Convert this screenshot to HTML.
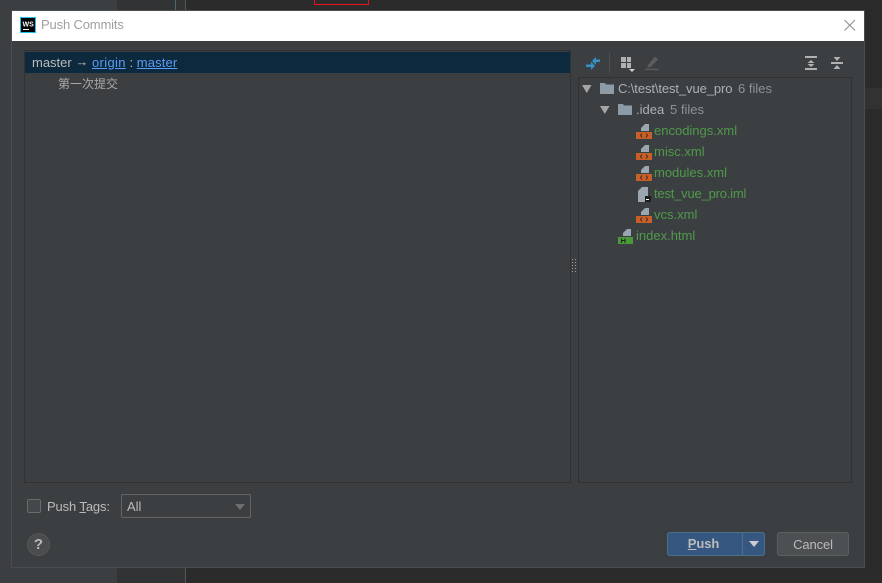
<!DOCTYPE html>
<html>
<head>
<meta charset="utf-8">
<style>
html,body{margin:0;padding:0;width:882px;height:583px;overflow:hidden;background:#2b2b2b;font-family:"Liberation Sans","Noto Sans CJK SC",sans-serif;font-size:13px;color:#bbb}
div,span,svg{position:absolute;white-space:nowrap;box-sizing:border-box}
u{text-underline-offset:1px}
.t{line-height:21px;height:21px}
.g{color:#4f9a4a}
.n{color:#8f9294}
</style>
</head>
<body>
<div style="left:0;top:0;width:117px;height:583px;background:#3c3f41"></div>
<div style="left:117px;top:0;width:68px;height:583px;background:#313335"></div>
<div style="left:185px;top:0;width:1px;height:583px;background:#555"></div>
<div style="left:175px;top:0;width:1px;height:10px;background:#4a6a70"></div>
<div style="left:314px;top:-2px;width:55px;height:7px;border:1px solid #e81123"></div>
<div style="left:864px;top:88px;width:18px;height:21px;background:#323232"></div>

<div style="left:11px;top:10px;width:854px;height:558px;background:#3c3f41;border:1px solid #4a4c4e"></div>
<div style="left:12px;top:11px;width:852px;height:30px;background:#fff"></div>
<svg style="left:20px;top:17px" width="16" height="16" viewBox="0 0 16 16"><rect x=".5" y=".5" width="15" height="15" fill="#000" stroke="#1cc4ee"/><rect x="3" y="12" width="6" height="1" fill="#fff"/><text x="2.500" y="9.500" font-family="Liberation Sans" font-size="7" font-weight="700" fill="#fff">WS</text></svg>
<div style="left:41px;top:15px;line-height:20px;color:#a0a0a0;font-size:13px;letter-spacing:-.15px">Push Commits</div>
<svg style="left:843px;top:19px" width="14" height="13" viewBox="0 0 14 13"><path d="M1.500 1L12 11.500M12 1L1.500 11.500" stroke="#8c8c8c" stroke-width="1" fill="none"/></svg>

<div style="left:24px;top:50px;width:547px;height:433px;border:1px solid #323232"></div>
<div style="left:25px;top:52px;width:545px;height:21px;background:#0d293e"></div>
<div class="t" style="left:32px;top:52px;color:#bbb">master <span style="position:relative;top:-1px">→</span> <u style="color:#589df6;letter-spacing:.35px">origin</u> : <u style="color:#589df6;letter-spacing:.15px">master</u></div>
<div class="t" style="left:58px;top:74px;color:#a9a9a9;font-size:12px">第一次提交</div>

<svg style="left:572px;top:259px" width="5" height="14"><g fill="#a0a0a0"><rect x="0" y="0" width="1" height="1"/><rect x="3" y="0" width="1" height="1"/><rect x="0" y="3" width="1" height="1"/><rect x="3" y="3" width="1" height="1"/><rect x="0" y="6" width="1" height="1"/><rect x="3" y="6" width="1" height="1"/><rect x="0" y="9" width="1" height="1"/><rect x="3" y="9" width="1" height="1"/><rect x="0" y="12" width="1" height="1"/><rect x="3" y="12" width="1" height="1"/></g></svg>

<svg style="left:585px;top:55px" width="16" height="16" viewBox="0 0 16 16"><path d="M15 4.500V7H11V10L7 6L11 2V4.500ZM1 9.500H6V6.500L10 11L6 15V12H1Z" fill="#3592c4"/></svg>
<div style="left:609px;top:53px;width:1px;height:20px;background:#515151"></div>
<svg style="left:620px;top:57px" width="16" height="16" viewBox="0 0 16 16"><g fill="#afb1b3"><rect x="1" y="0" width="5" height="5"/><rect x="7" y="0" width="4" height="5"/><rect x="1" y="6" width="5" height="5"/><rect x="7" y="6" width="4" height="5"/></g><path d="M9 12H15L12 15Z" fill="#cfcfcf"/></svg>
<svg style="left:644px;top:55px" width="16" height="16" viewBox="0 0 16 16"><path d="M4 10L11 1.500L14 4.500L6.500 12L3.500 12.500ZM1 13.700H15V15H1Z" fill="#5a5c5e"/></svg>
<svg style="left:803px;top:55px" width="16" height="16" viewBox="0 0 16 16"><path d="M2 1H14V3H2ZM2 13H14V15H2ZM8 5L11.500 8H4.500ZM4.500 9H11.500L8 12Z" fill="#afb1b3"/></svg>
<svg style="left:829px;top:55px" width="16" height="16" viewBox="0 0 16 16"><path d="M2 7H14V9H2ZM4.500 2H11.500L8 6ZM8 10L11.500 14H4.500Z" fill="#afb1b3"/></svg>

<div style="left:578px;top:77px;width:274px;height:406px;border:1px solid #323232"></div>

<svg style="left:582px;top:85px" width="10" height="8"><path d="M0 0H9.500L4.750 8Z" fill="#a4a6a8"/></svg>
<svg style="left:600px;top:83px" width="14" height="11"><path d="M0 0H5L6 1.500H14V11H0Z" fill="#8d9ba6"/></svg>
<div class="t" style="left:618px;top:78px;color:#a9b1b8;letter-spacing:-.1px">C:\test\test_vue_pro</div>
<div class="t n" style="left:738px;top:78px">6 files</div>

<svg style="left:600px;top:106px" width="10" height="8"><path d="M0 0H9.500L4.750 8Z" fill="#a4a6a8"/></svg>
<svg style="left:618px;top:104px" width="14" height="11"><path d="M0 0H5L6 1.500H14V11H0Z" fill="#8d9ba6"/></svg>
<div class="t" style="left:636px;top:99px;color:#a9b1b8">.idea</div>
<div class="t n" style="left:670px;top:99px">5 files</div>

<svg style="left:636px;top:123px" width="16" height="16" viewBox="0 0 16 16"><path d="M5 5L9 1H13V8H5Z" fill="#9aa7b0"/><rect x="0" y="9" width="16" height="7" fill="#c75f28"/><path d="M6 10.500L4.500 12.500L6 14.500M10 10.500L11.500 12.500L10 14.500" stroke="#3a2a20" fill="none"/></svg>
<div class="t g" style="left:654px;top:120px">encodings.xml</div>
<svg style="left:636px;top:144px" width="16" height="16" viewBox="0 0 16 16"><path d="M5 5L9 1H13V8H5Z" fill="#9aa7b0"/><rect x="0" y="9" width="16" height="7" fill="#c75f28"/><path d="M6 10.500L4.500 12.500L6 14.500M10 10.500L11.500 12.500L10 14.500" stroke="#3a2a20" fill="none"/></svg>
<div class="t g" style="left:654px;top:141px">misc.xml</div>
<svg style="left:636px;top:165px" width="16" height="16" viewBox="0 0 16 16"><path d="M5 5L9 1H13V8H5Z" fill="#9aa7b0"/><rect x="0" y="9" width="16" height="7" fill="#c75f28"/><path d="M6 10.500L4.500 12.500L6 14.500M10 10.500L11.500 12.500L10 14.500" stroke="#3a2a20" fill="none"/></svg>
<div class="t g" style="left:654px;top:162px">modules.xml</div>
<svg style="left:636px;top:186px" width="16" height="16" viewBox="0 0 16 16"><path d="M2 5L6 1H12V10H9V16H2Z" fill="#9aa7b0"/><rect x="9" y="10" width="6" height="6" fill="#1e1e1e"/><rect x="10" y="13" width="3" height="1" fill="#fff"/></svg>
<div class="t g" style="left:654px;top:183px;letter-spacing:-.2px">test_vue_pro.iml</div>
<svg style="left:636px;top:207px" width="16" height="16" viewBox="0 0 16 16"><path d="M5 5L9 1H13V8H5Z" fill="#9aa7b0"/><rect x="0" y="9" width="16" height="7" fill="#c75f28"/><path d="M6 10.500L4.500 12.500L6 14.500M10 10.500L11.500 12.500L10 14.500" stroke="#3a2a20" fill="none"/></svg>
<div class="t g" style="left:654px;top:204px">vcs.xml</div>
<svg style="left:618px;top:228px" width="16" height="16" viewBox="0 0 16 16"><path d="M5 5L9 1H13V8H5Z" fill="#9aa7b0"/><rect x="0" y="9" width="15" height="7" fill="#4b9a3a"/><path d="M3.500 10.500V15M7 10.500V15M3.500 12.500H7" stroke="#1e1e1e" fill="none"/></svg>
<div class="t g" style="left:636px;top:225px">index.html</div>

<div style="left:27px;top:499px;width:14px;height:14px;border:1px solid #6b6b6b;border-radius:2px;background:#43494a"></div>
<div style="left:47px;top:496px;line-height:21px;color:#bbb;letter-spacing:-.12px">Push <u>T</u>ags:</div>
<div style="left:121px;top:494px;width:130px;height:24px;border:1px solid #646464;border-radius:2px;background:#3c3f41"></div>
<div style="left:127px;top:496px;line-height:21px;color:#bbb">All</div>
<svg style="left:235px;top:504px" width="10" height="6"><path d="M0 0H10L5 6Z" fill="#6e6e6e"/></svg>

<div style="left:27px;top:533px;width:23px;height:23px;border-radius:50%;background:#4a4d4f;border:1px solid #555;color:#bbb;font-weight:700;font-size:15px;line-height:21px;text-align:center">?</div>

<div style="left:667px;top:532px;width:98px;height:24px;border:1px solid #4c708c;border-radius:3px;background:#365880"></div>
<div style="left:742px;top:533px;width:1px;height:22px;background:#4c708c"></div>
<div style="left:666px;top:533px;width:75px;line-height:22px;text-align:center;color:#bbbbbb;font-weight:700;letter-spacing:-.1px"><u>P</u>ush</div>
<svg style="left:749px;top:541px" width="10" height="6"><path d="M0 0H10L5 6Z" fill="#c8ced3"/></svg>
<div style="left:777px;top:532px;width:72px;height:24px;border:1px solid #5e6060;border-radius:3px;background:#4c5052;line-height:23px;text-align:center;color:#bbb;letter-spacing:-.1px">Cancel</div>
</body>
</html>
